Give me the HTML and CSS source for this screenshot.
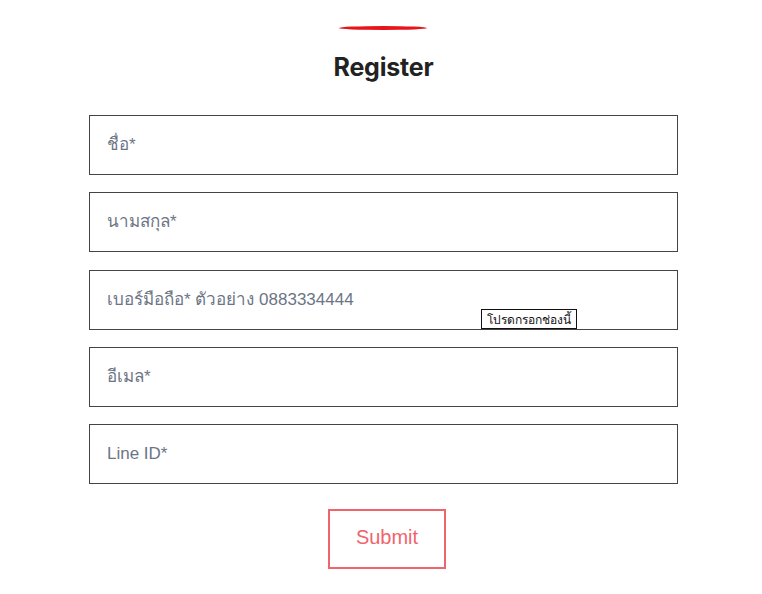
FILE: index.html
```html
<!DOCTYPE html>
<html lang="th">
<head>
<meta charset="utf-8">
<link rel="stylesheet" href="styles.css">
</head>
<body>
<div class="page">
  <div class="accent"></div>
  <h1 class="title">Register</h1>
  <form class="form">
    <div class="field"><input class="input" type="text" placeholder="ชื่อ*"></div>
    <div class="field"><input class="input" type="text" placeholder="นามสกุล*"></div>
    <div class="field">
      <input class="input" type="text" placeholder="เบอร์มือถือ* ตัวอย่าง 0883334444">
      <div class="tip">โปรดกรอกช่องนี้</div>
    </div>
    <div class="field"><input class="input" type="text" placeholder="อีเมล*"></div>
    <div class="field"><input class="input" type="text" placeholder="Line ID*"></div>
    <div class="actions"><button class="submit" type="button">Submit</button></div>
  </form>
</div>
</body>
</html>
```
FILE: styles.css
```css
html, body {
  margin: 0;
  padding: 0;
  background: #fff;
}
body {
  font-family: "Liberation Sans", "Noto Sans", sans-serif;
}
.page {
  width: 589px;
  margin-left: 89px;
  padding-top: 26px;
}
.accent {
  width: 88px;
  height: 4px;
  margin-left: 250px;
  background: #e8141c;
  border-radius: 44px / 2px;
}
.title {
  margin: 22px 0 0;
  text-align: center;
  font-family: Inter, "Liberation Sans", sans-serif;
  font-weight: 700;
  font-size: 25px;
  line-height: 30px;
  color: #222;
  letter-spacing: -0.2px;
}
.form {
  margin-top: 33px;
}
.field {
  position: relative;
  margin-bottom: 17.3px;
}
.input {
  display: block;
  box-sizing: border-box;
  width: 589px;
  height: 60px;
  margin: 0;
  padding: 0 17px;
  border: 1px solid #444;
  border-radius: 0;
  font-family: "Liberation Sans", "Noto Sans", sans-serif;
  font-size: 17px;
  color: #333;
  outline: none;
}
.input::placeholder {
  color: #6c7585;
}
.tip {
  position: absolute;
  left: 392px;
  top: 39px;
  height: 20px;
  padding: 0 5px;
  border: 1px solid #111;
  background: #fff;
  font-family: "Noto Sans", "Liberation Sans", sans-serif;
  font-size: 12px;
  line-height: 20px;
  color: #111;
  box-sizing: border-box;
}
.actions {
  display: flex;
  justify-content: center;
  padding-left: 7px;
  margin-top: 8px;
  padding-top: 8px;
}
.submit {
  width: 118px;
  height: 60px;
  padding: 0 0 4px;
  background: #fff;
  border: 2px solid #f0646c;
  color: #f0646c;
  font-family: "Liberation Sans", "Noto Sans", sans-serif;
  font-size: 20px;
  cursor: pointer;
}
```
